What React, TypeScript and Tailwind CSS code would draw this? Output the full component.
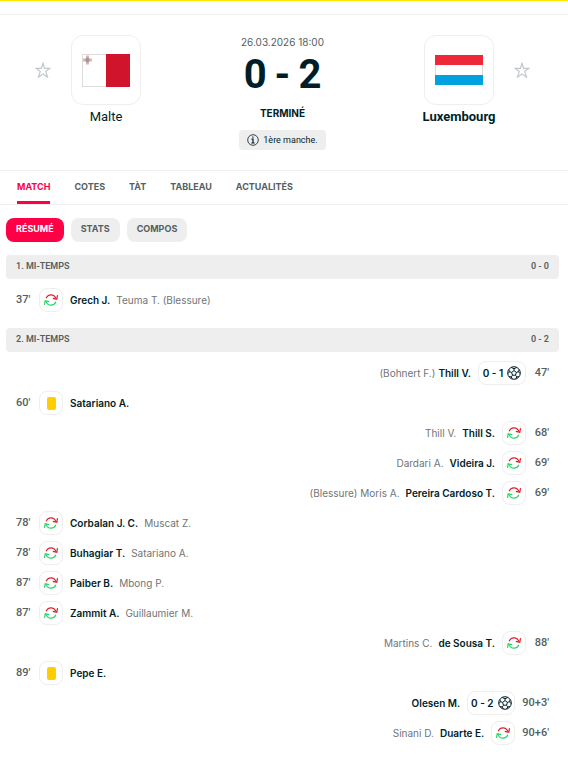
import type { ReactNode } from "react";

type EventKind = "sub" | "card" | "goal";

interface MatchEvent {
  side: "home" | "away";
  time: string;
  kind: EventKind;
  player: string;
  other?: string;
  score?: string;
}

const firstHalf: MatchEvent[] = [
  { side: "home", time: "37'", kind: "sub", player: "Grech J.", other: "Teuma T. (Blessure)" },
];

const secondHalf: MatchEvent[] = [
  { side: "away", time: "47'", kind: "goal", player: "Thill V.", other: "(Bohnert F.)", score: "0 - 1" },
  { side: "home", time: "60'", kind: "card", player: "Satariano A." },
  { side: "away", time: "68'", kind: "sub", player: "Thill S.", other: "Thill V." },
  { side: "away", time: "69'", kind: "sub", player: "Videira J.", other: "Dardari A." },
  { side: "away", time: "69'", kind: "sub", player: "Pereira Cardoso T.", other: "(Blessure) Moris A." },
  { side: "home", time: "78'", kind: "sub", player: "Corbalan J. C.", other: "Muscat Z." },
  { side: "home", time: "78'", kind: "sub", player: "Buhagiar T.", other: "Satariano A." },
  { side: "home", time: "87'", kind: "sub", player: "Paiber B.", other: "Mbong P." },
  { side: "home", time: "87'", kind: "sub", player: "Zammit A.", other: "Guillaumier M." },
  { side: "away", time: "88'", kind: "sub", player: "de Sousa T.", other: "Martins C." },
  { side: "home", time: "89'", kind: "card", player: "Pepe E." },
  { side: "away", time: "90+3'", kind: "goal", player: "Olesen M.", score: "0 - 2" },
  { side: "away", time: "90+6'", kind: "sub", player: "Duarte E.", other: "Sinani D." },
];

function SubIcon() {
  return (
    <svg viewBox="0 0 14 14" className="size-3.5" fill="none" strokeWidth="1.2" role="img" aria-label="Remplacement">
      <path d="M2.200 5.200C3 3 4.800 1.800 7 1.800c2.100 0 3.900 1.100 4.900 3.600" stroke="#dc1e28" />
      <path d="M13.500 2.200l-.7 4-4-.8" stroke="#dc1e28" />
      <path d="M11.800 8.800C11 11 9.200 12.200 7 12.200c-2.100 0-3.900-1.100-4.900-3.600" stroke="#1ed760" />
      <path d="M.5 11.800l.7-4 4 .8" stroke="#1ed760" />
    </svg>
  );
}

function BallIcon() {
  return (
    <svg viewBox="0 0 14 14" className="size-3.5" fill="none" stroke="#001e28" strokeWidth="1" role="img" aria-label="But">
      <circle cx="7" cy="7" r="6.300" />
      <path d="M7 4.600l2.400 1.800-.9 2.800h-3l-.9-2.800z" />
      <path d="M7 4.600V2.700M9.400 6.400l2-.7M8.500 9.200l1.200 1.700M5.500 9.200l-1.200 1.700M4.600 6.400l-2-.7" />
      <path d="M4.200 1.500L7 2.700l2.800-1.200M12.200 3.500l-.8 2.200 1.800 2M12 10.700l-2.300.2-1 2.100M5.300 13l-1-2.100-2.300-.2M.8 7.700l1.800-2-.8-2.200" />
    </svg>
  );
}

function Star({ team }: { team: string }) {
  return (
    <button type="button" aria-label={`Suivre ${team}`} className="mt-[27px] size-4 shrink-0">
      <svg viewBox="0 0 16 16" fill="none" stroke="#c3c9cb" strokeWidth="1.2">
        <path d="M8 1.300l1.600 5h5.400l-4.300 3.200 1.900 5.700L8 11.900l-4.600 3.300 1.900-5.700L1 6.300h5.400z" />
      </svg>
    </button>
  );
}

function MaltaFlag() {
  return (
    <svg viewBox="0 0 48 33" className="h-[33px] w-12" role="img" aria-label="Drapeau de Malte">
      <rect x=".5" y=".5" width="47" height="32" fill="#fff" stroke="#dcdcdc" />
      <rect x="24" width="24" height="33" fill="#cf142b" />
      <path d="M4 1.500h3v3h3v3H7v3H4v-3H1v-3h3z" fill="#dfb4b8" />
      <path d="M4.500 3.500h2v1h1v3h-1v1h-2v-1h-1v-3h1z" fill="#999" />
    </svg>
  );
}

function LuxembourgFlag() {
  return (
    <svg viewBox="0 0 48 30" className="h-[30px] w-12" role="img" aria-label="Drapeau du Luxembourg">
      <rect x=".5" y=".5" width="47" height="29" fill="#fff" stroke="#dcdcdc" />
      <rect width="48" height="10" fill="#ed2939" />
      <rect y="20" width="48" height="10" fill="#00a1de" />
    </svg>
  );
}

function Team({ name, winner, children }: { name: string; winner?: boolean; children: ReactNode }) {
  return (
    <div className="flex w-[110px] flex-col items-center">
      <div className="flex size-[70px] items-center justify-center rounded-xl border border-[#eee]">{children}</div>
      <a href="#" className={`mt-0.5 text-[13px] leading-5 ${winner ? "font-bold" : ""}`}>
        {name}
      </a>
    </div>
  );
}

function Row({ event }: { event: MatchEvent }) {
  const away = event.side === "away";
  return (
    <li className={`flex h-[30px] items-center gap-[7px] px-2.5 ${away ? "flex-row-reverse" : ""}`}>
      <span
        className={`min-w-4 font-[Roboto,sans-serif] text-[11px] font-medium text-[#555e61] ${away ? "text-right" : ""}`}
      >
        {event.time}
      </span>
      <span
        className={`flex h-6 items-center justify-center gap-1 rounded-lg border border-[#eee] font-semibold ${
          event.kind === "goal" ? "w-12" : "w-6"
        }`}
      >
        {event.score && <span>{event.score}</span>}
        {event.kind === "sub" && <SubIcon />}
        {event.kind === "goal" && <BallIcon />}
        {event.kind === "card" && <span className="h-[13px] w-[9px] rounded-xs bg-[#ffcd00]" />}
      </span>
      <span
        className={`flex items-center ${event.kind === "goal" ? "gap-[3px]" : "gap-1.5"} ${
          away ? "flex-row-reverse" : ""
        }`}
      >
        <a href="#" className="font-semibold">{event.player}</a>
        {event.other && <a href="#" className="text-[#6f7577]">{event.other}</a>}
      </span>
    </li>
  );
}

function Half({ title, score, events }: { title: string; score: string; events: MatchEvent[] }) {
  return (
    <section>
      <h2 className="flex h-6 items-center justify-between rounded bg-[#eee] px-2.5 pb-0.5 text-[9px] font-semibold text-[#555e61]">
        <span>{title}</span>
        <span>{score}</span>
      </h2>
      <ul className="pt-1.5 font-[Inter,sans-serif] text-[10px]">
        {events.map((event) => (
          <Row key={event.time + event.player} event={event} />
        ))}
      </ul>
    </section>
  );
}

const tabs = ["MATCH", "COTES", "TÀT", "TABLEAU", "ACTUALITÉS"];
const views = ["RÉSUMÉ", "STATS", "COMPOS"];

export default function App() {
  return (
    <div className="bg-white font-[Roboto,sans-serif] text-[11px] leading-4 text-[#001e28]">
      <div className="h-[15px] border-t border-b border-t-[#ffe600] border-b-[#eee]" />
      <header className="flex h-[155px] items-start justify-between pt-5 pr-[38px] pl-[35px]">
        <div className="flex">
          <Star team="Malte" />
          <Team name="Malte">
            <MaltaFlag />
          </Team>
        </div>
        <div className="flex flex-col items-center">
          <time className="-mt-px font-[Inter,sans-serif] text-[10px] text-[#555e61]">26.03.2026 18:00</time>
          <div className="mt-px flex h-12 items-center gap-2 text-[40px] leading-[48px] font-bold">
            <span>0</span>
            <span>-</span>
            <span>2</span>
          </div>
          <strong className="mt-1.5 font-[Inter,sans-serif] text-[10px] font-bold">TERMINÉ</strong>
          <p className="mt-[9px] flex h-5 items-center gap-1 rounded bg-[#eee] px-2 pb-px text-[9px]">
            <svg viewBox="0 0 12 12" className="size-3" fill="none" stroke="#001e28">
              <circle cx="6" cy="6" r="5.300" strokeWidth=".8" />
              <path d="M4.500 5.200H6V9M4.300 9h3.400M5.300 3.200h1.200" strokeWidth="1.200" />
            </svg>
            1ère manche.
          </p>
        </div>
        <div className="flex">
          <Team name="Luxembourg" winner>
            <LuxembourgFlag />
          </Team>
          <Star team="Luxembourg" />
        </div>
      </header>
      <nav className="flex h-[35px] gap-6 border-t border-b border-[#eee] pl-[17px] font-[Inter,sans-serif] text-[9px] font-bold">
        {tabs.map((tab, i) => (
          <a
            key={tab}
            href="#"
            className={`flex items-center border-b-[3px] pt-0.5 ${
              i === 0 ? "border-[#ff0046] text-[#ff0046]" : "border-transparent text-[#555e61]"
            }`}
          >
            {tab}
          </a>
        ))}
      </nav>
      <main className="pr-[9px] pb-2 pl-1.5">
        <div className="flex gap-[7px] py-[13px] font-[Inter,sans-serif] text-[9px] font-bold">
          {views.map((view, i) => (
            <button
              key={view}
              type="button"
              className={`h-6 rounded-lg px-2.5 pb-0.5 ${i === 0 ? "bg-[#ff0046] text-white" : "bg-[#eee] text-[#555e61]"}`}
            >
              {view}
            </button>
          ))}
        </div>
        <div className="flex flex-col gap-[13px]">
          <Half title="1. MI-TEMPS" score="0 - 0" events={firstHalf} />
          <Half title="2. MI-TEMPS" score="0 - 2" events={secondHalf} />
        </div>
      </main>
    </div>
  );
}
